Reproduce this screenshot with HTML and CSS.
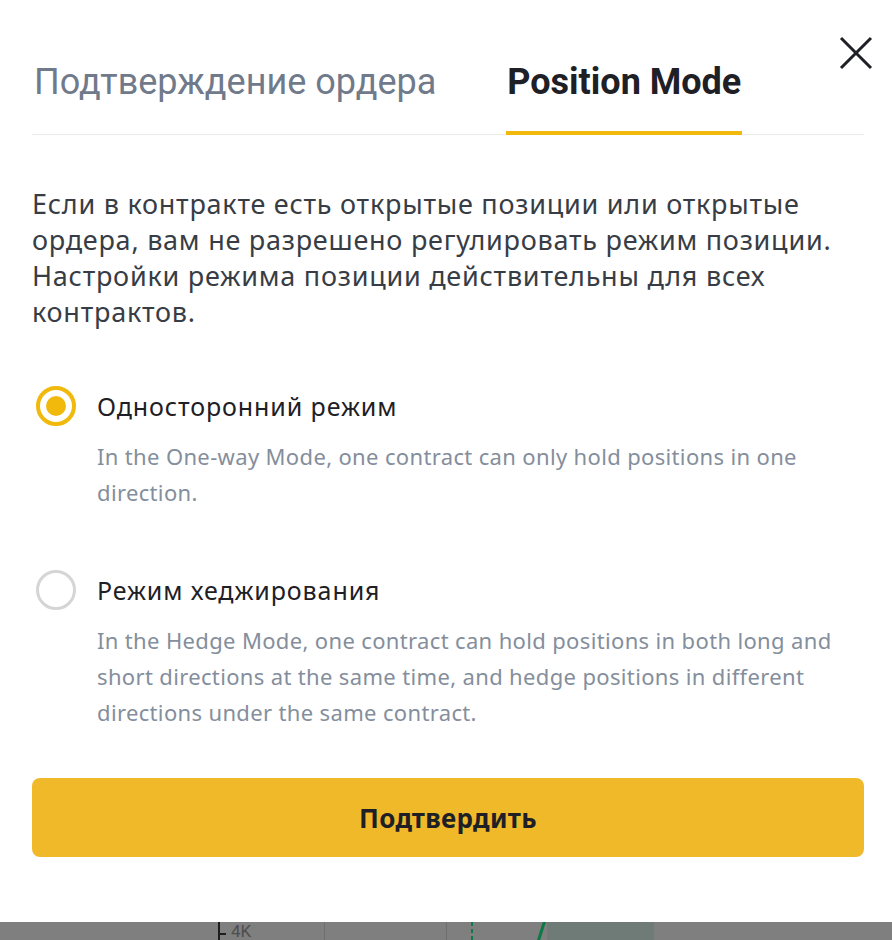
FILE: index.html
```html
<!DOCTYPE html>
<html lang="ru">
<head>
<meta charset="utf-8">
<title>Position Mode</title>
<link rel="stylesheet" href="styles.css">
</head>
<body>
<div class="modal">
  <button class="close" aria-label="Закрыть">
    <svg width="34" height="34" viewBox="0 0 34 34"><path d="M2 2 L32 32 M32 2 L2 32" stroke="#1E2026" stroke-width="3" fill="none" stroke-linecap="butt"/></svg>
  </button>
  <div class="tabs">
    <div class="tab">Подтверждение ордера</div>
    <div class="tab active">Position Mode</div>
  </div>
  <p class="intro">Если в контракте есть открытые позиции или открытые ордера, вам не разрешено регулировать режим позиции. Настройки режима позиции действительны для всех контрактов.</p>
  <div class="options">
    <div class="option">
      <div class="option-head">
        <span class="radio checked"></span>
        <span class="label">Односторонний режим</span>
      </div>
      <p class="desc">In the One-way Mode, one contract can only hold positions in one direction.</p>
    </div>
    <div class="option">
      <div class="option-head">
        <span class="radio"></span>
        <span class="label">Режим хеджирования</span>
      </div>
      <p class="desc">In the Hedge Mode, one contract can hold positions in both long and short directions at the same time, and hedge positions in different directions under the same contract.</p>
    </div>
  </div>
  <button class="confirm">Подтвердить</button>
</div>
<div class="chart-strip">
  <span class="axis"></span>
  <span class="tick"></span>
  <span class="axis-label">4K</span>
  <span class="grid g1"></span>
  <span class="grid g2"></span>
  <span class="dash"></span>
  <span class="zone"></span>
  <span class="candle"></span>
</div>
</body>
</html>
```
FILE: styles.css
```css
* { box-sizing: border-box; }
html, body { margin: 0; padding: 0; background: #fff; }
body { width: 892px; height: 940px; overflow: hidden; font-family: "Noto Sans", "Open Sans", sans-serif; }

.modal {
  position: relative;
  padding: 62px 28px 65px 32px;
}

.close {
  position: absolute;
  top: 36px;
  right: 19px;
  width: 34px;
  height: 34px;
  padding: 0;
  border: 0;
  background: none;
}
.close svg { display: block; }

.tabs {
  display: flex;
  gap: 70px;
  border-bottom: 1px solid #EAECEF;
}
.tab {
  font-family: Roboto, "Liberation Sans", sans-serif;
  font-size: 36px;
  line-height: 40px;
  color: #707A8A;
  padding-bottom: 29px;
  border-bottom: 4px solid transparent;
  margin-bottom: -1px;
  white-space: nowrap;
}
.tab:first-child { padding-left: 2px; }
.tab.active {
  color: #1E2026;
  font-weight: 700;
  border-bottom-color: #F0B90B;
  padding-left: 1px;
  padding-right: 1px;
}

.intro {
  margin: 51px 0 0;
  font-size: 27px;
  line-height: 36px;
  letter-spacing: 0.75px;
  color: #383D45;
}

.options {
  margin-top: 58px;
  display: flex;
  flex-direction: column;
  gap: 62px;
}
.option-head {
  display: flex;
  align-items: center;
  gap: 21px;
  height: 36px;
}
.radio {
  width: 40px;
  height: 40px;
  border-radius: 50%;
  border: 3px solid #D5D5D5;
  flex: none;
  margin-left: 4px;
  display: flex;
  align-items: center;
  justify-content: center;
}
.radio.checked {
  border: 4px solid #F0B90B;
}
.radio.checked::after {
  content: "";
  width: 20px;
  height: 20px;
  border-radius: 50%;
  background: #F0B90B;
}
.label {
  font-size: 25px;
  line-height: 36px;
  letter-spacing: 0.9px;
  color: #1E2026;
}
.desc {
  margin: 14px 0 0 65px;
  font-size: 22px;
  line-height: 36px;
  letter-spacing: 0.35px;
  color: #848E9C;
}

.confirm {
  display: block;
  width: 832px;
  height: 79px;
  margin-top: 48px;
  border: 0;
  border-radius: 8px;
  background: #F0B92A;
  color: #1E2026;
  font-family: "Noto Sans", "Open Sans", sans-serif;
  font-size: 26px;
  font-weight: 700;
  letter-spacing: 0.3px;
}

.chart-strip {
  position: relative;
  height: 18px;
  background: #7F7F7F;
  overflow: hidden;
}
.chart-strip span { position: absolute; }
.axis { left: 218px; top: 0; width: 2px; height: 18px; background: #1E1E1E; }
.tick { left: 219px; top: 11px; width: 7px; height: 2px; background: #1E1E1E; }
.axis-label { left: 231px; top: 1px; font-family: Roboto, sans-serif; font-size: 17px; line-height: 17px; color: #4E4E4E; }
.grid { top: 0; width: 1px; height: 18px; background: #6F6F6F; }
.g1 { left: 324px; }
.g2 { left: 446px; }
.dash { left: 471px; top: 0; width: 2px; height: 18px; background: repeating-linear-gradient(to bottom, #0E7A4A 0 4px, transparent 4px 7px); }
.zone { left: 547px; top: 0; width: 107px; height: 18px; background: #6E7B76; }
.candle { left: 540px; top: -2px; width: 3px; height: 22px; background: #0B7A45; transform: rotate(18deg); }
```
